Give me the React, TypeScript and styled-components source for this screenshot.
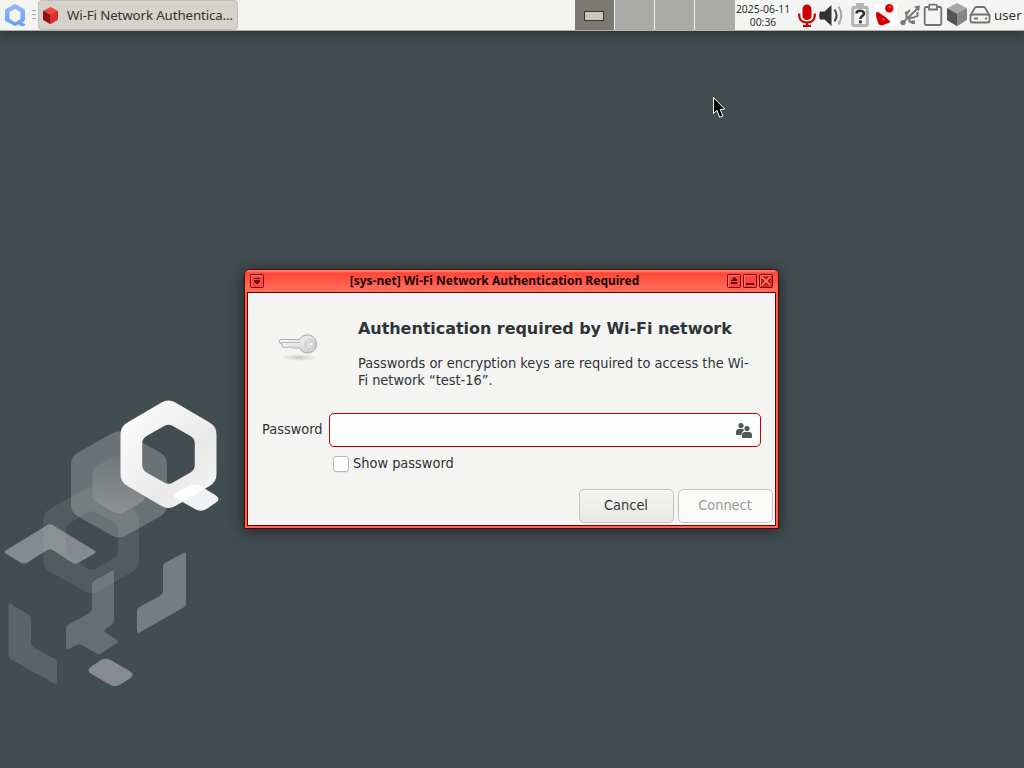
import React from 'react';
import styled, { createGlobalStyle, css } from 'styled-components';

const GlobalStyle = createGlobalStyle`
  * { box-sizing: border-box; }
  body { margin: 0; overflow: hidden; background: #424d52; }
  svg { display: block; flex: none; }
`;

const Desktop = styled.div`
  position: relative;
  width: 1024px;
  height: 768px;
  overflow: hidden;
  background: #424d52;
  color: #2e3436;
  font-family: 'Noto Sans', sans-serif;
`;

const Panel = styled.header`
  display: flex;
  height: 31px;
  background: #f4f4f2;
  border-bottom: 1px solid #b9aea5;
  box-shadow: 0 2px 12px rgba(18, 24, 28, 0.65);
`;

const MenuButton = styled.div`
  width: 31px;
  padding: 3px 0 0 4px;
`;

const Handle = styled.div`
  display: flex;
  flex-direction: column;
  gap: 3px;
  width: 7px;
  padding: 10px 2px 0 1px;
`;

const HandleLine = styled.i`
  height: 1px;
  background: #a9a9a7;
`;

const Task = styled.div`
  display: flex;
  align-items: center;
  width: 200px;
  height: 30px;
  padding: 0 0 0 4px;
  gap: 9px;
  border: 1px solid #c3bfb7;
  border-radius: 4px;
  background: #d5d2cb;
  font-size: 13.33px;
  letter-spacing: -0.13px;
  white-space: nowrap;
`;

const Pager = styled.div`
  display: grid;
  grid-template-columns: 39px 39px 39px 40px;
  gap: 1px;
  width: 160px;
  height: 30px;
  margin-left: 337px;
  background: #f4f4f2;
`;

const Workspace = styled.div<{ $active?: boolean }>`
  padding: 11px 0 0 9px;
  background: ${p => (p.$active ? '#7c7972' : '#aaaaa8')};
`;

const MiniWindow = styled.div`
  width: 20px;
  height: 10px;
  border: 1px solid #2e3436;
  background: #c8c8c0;
`;

const Clock = styled.div`
  width: 58px;
  padding: 3px 2px 0 0;
  font-size: 10.4px;
  line-height: 13px;
  text-align: center;
  white-space: nowrap;
`;

const Tray = styled.div`
  display: flex;
  align-items: flex-start;
  padding-top: 3px;
`;

const User = styled.span`
  padding: 3px 0 0 3px;
  font-size: 13.33px;
  line-height: 18px;
`;

const Wallpaper = styled.svg`
  position: absolute;
  left: 0;
  top: 390px;
`;

const Cursor = styled.svg`
  position: absolute;
  left: 712px;
  top: 96px;
`;

const Window = styled.section`
  position: absolute;
  left: 244px;
  top: 269px;
  width: 535px;
  height: 260px;
  padding: 0 2px 2px;
  border: 1px solid #5c0505;
  border-radius: 6px 6px 0 0;
  background: #ff6250;
  box-shadow: 0 2px 14px 2px rgba(15, 20, 24, 0.55), inset 0 1px #ff9384;
`;

const TitleBar = styled.div`
  display: flex;
  align-items: center;
  gap: 2px;
  height: 22px;
  margin: 0 -2px;
  padding: 0 5px 0;
  border-radius: 5px 5px 0 0;
  background: linear-gradient(#ff8070 0 1px, #ff4635 3px, #ff6957 18px);
`;

const WindowTitle = styled.h1`
  flex: 1;
  margin: 0;
  padding-right: 2px;
  color: #1a0504;
  font-size: 12px;
  line-height: 20px;
  font-weight: 700;
  text-align: center;
  white-space: nowrap;
`;

const Content = styled.div`
  height: 234px;
  padding: 24px 2px 2px 14px;
  border: 1px solid #5c0505;
  background: #f4f4f2;
  font-family: 'DejaVu Sans Condensed', 'DejaVu Sans', sans-serif;
  font-stretch: condensed;
  font-size: 14.43px;
`;

const Intro = styled.div`
  display: flex;
  height: 96px;
`;

const KeyBox = styled.div`
  width: 96px;
  padding: 13px 0 0 14px;
`;

const Heading = styled.h2`
  margin: 1px 0 15px;
  font-family: 'DejaVu Sans', sans-serif;
  font-stretch: normal;
  font-size: 16px;
  letter-spacing: -0.05px;
  line-height: 22px;
  font-weight: 700;
  white-space: nowrap;
`;

const Message = styled.p`
  margin: 0;
  line-height: 17px;
  white-space: nowrap;
`;

const Field = styled.label`
  display: flex;
  align-items: center;
  gap: 6px;
  height: 34px;
`;

const FieldName = styled.span`
  width: 61px;
  padding-bottom: 2px;
  white-space: nowrap;
`;

const Entry = styled.div`
  display: flex;
  align-items: center;
  justify-content: flex-end;
  width: 432px;
  height: 34px;
  padding: 1px 8px 0 0;
  border: 1px solid #c00000;
  border-radius: 5px;
  background: #fff;
`;

const Option = styled.label`
  display: flex;
  align-items: center;
  gap: 4px;
  height: 18px;
  margin: 7px 0 0 71px;
  line-height: 18px;
  white-space: nowrap;
`;

const CheckBox = styled.span`
  width: 16px;
  height: 16px;
  margin-top: 2px;
  border: 1px solid #b9b9b4;
  border-radius: 3px;
  background: #fff;
  box-shadow: 0 1px rgba(0, 0, 0, 0.05);
`;

const Actions = styled.div`
  display: flex;
  justify-content: flex-end;
  gap: 4px;
  margin-top: 17px;
`;

const Button = styled.button<{ $muted?: boolean }>`
  width: 95px;
  height: 34px;
  padding: 0 1px 2px 0;
  border: 1px solid #c3c3bd;
  border-radius: 5px;
  color: #2e3436;
  background: linear-gradient(#f4f4f2, #e8e8e3);
  box-shadow: inset 0 1px #fff;
  font: inherit;
  ${p =>
    p.$muted &&
    css`
      color: #979a99;
      background: #fafaf8;
    `}
`;

type Point = [number, number];

/* Closed path through the points with each corner softened by radius r. */
function soft(points: Point[], r: number): string {
  const n = points.length;
  const toward = (a: Point, b: Point): Point => {
    const d = Math.hypot(b[0] - a[0], b[1] - a[1]);
    const t = Math.min(r, d / 2) / d;
    return [a[0] + (b[0] - a[0]) * t, a[1] + (b[1] - a[1]) * t];
  };
  return (
    points
      .map((p, i) => {
        const s = toward(p, points[(i + n - 1) % n]);
        const e = toward(p, points[(i + 1) % n]);
        return `${i ? 'L' : 'M'}${s.join(' ')}Q${p.join(' ')} ${e.join(' ')}`;
      })
      .join('') + 'Z'
  );
}

function hex(cx: number, top: number, bottom: number, half: number, slope: number): string {
  return soft(
    [
      [cx, top],
      [cx + half, top + slope],
      [cx + half, bottom - slope],
      [cx, bottom],
      [cx - half, bottom - slope],
      [cx - half, top + slope],
    ],
    half > 30 ? 8 : 5,
  );
}

const QubesArt = () => (
  <Wallpaper width="230" height="310" viewBox="0 390 230 310">
    <defs>
      <linearGradient id="q" x1="0" x2="1" y2="1">
        <stop offset="0" stopColor="#fff" />
        <stop offset=".65" stopColor="#e9e9ea" />
        <stop offset="1" stopColor="#f8f8f8" />
      </linearGradient>
      <linearGradient id="inner" x2="0" y2="1">
        <stop stopColor="#74787b" />
        <stop offset="1" stopColor="#93979a" />
      </linearGradient>
    </defs>
    <path fill="#b5b5b0" opacity=".14" fillRule="evenodd" d={hex(91.2, 485.5, 595, 47.8, 27) + hex(92, 510, 571, 26, 15)} />
    <path fill="#d0d0d0" opacity=".29" d={hex(119, 429.5, 539.5, 48, 27)} />
    <path fill="url(#inner)" opacity=".8" d={hex(119, 453.5, 515, 26.5, 15)} />
    <path fill="#bec0c2" opacity=".53" d={soft([[3, 552], [50, 523.5], [97, 552], [75.5, 564.5], [50, 548.5], [24, 564.5]], 3)} />
    <path fill="#bdc1c2" opacity=".42" d={soft([[163, 564], [186, 551.5], [186, 606], [137, 634], [137, 608.5], [163, 594]], 3)} />
    <path fill="#b4b4be" opacity=".32" d={soft([[92, 582], [114, 569.5], [114, 623], [103, 631], [119, 641.5], [99, 655], [79.5, 643.5], [66, 650.5], [66, 626], [92, 611.5]], 3)} />
    <path fill="#b4b4be" opacity=".22" d={soft([[8.5, 602.5], [31, 616], [31, 646], [57, 660], [57, 685], [8.5, 658]], 3)} />
    <path fill="#858b8e" d={soft([[85.5, 670.5], [105.5, 657], [135.5, 674.5], [115.5, 688]], 7)} />
    <path fill="url(#q)" fillRule="evenodd" d={hex(168.5, 398.5, 510, 48, 28) + hex(168.5, 423.5, 485, 26.3, 15)} />
    <path fill="#fff" opacity=".93" d={soft([[171, 495.5], [195, 482.5], [221.5, 499], [201, 512.5]], 7)} />
  </Wallpaper>
);

const QubesLogo = () => (
  <svg width="22" height="25" viewBox="0 0 22 25">
    <defs>
      <linearGradient id="logo" x2="0" y2="1">
        <stop stopColor="#96bdfa" />
        <stop offset="1" stopColor="#629cf4" />
      </linearGradient>
    </defs>
    <path fill="url(#logo)" fillRule="evenodd" d="M11 .8 20 6q1 .6 1 2v8q0 1.400-1 2.200l-2 1.200 3.800 2.200-3 2.200-4.600-2.400-3.200 1.600L2 18.200Q1 17.500 1 16.500V8q0-1.400 1-2ZM11 5.800 5.500 9v7l5.500 3.200 5.500-3.200V9Z" />
  </svg>
);

const Cube = ({ size, tones, ...rest }: { size: [number, number]; tones: [string, string, string] } & React.SVGProps<SVGSVGElement>) => (
  <svg width={size[0]} height={size[1]} viewBox="0 0 20 22" preserveAspectRatio="none" {...rest}>
    <path fill={tones[0]} d="M10 0 19 4.600 20 6v9.500L18.500 17 10 22 1 17 0 15.500V6l1-1.400Z" />
    <path fill={tones[1]} d="m.3 5 9.700 5.500V22L1 17l-1-1.500V6Z" />
    <path fill={tones[2]} d="M10 10.500 19.700 5l.3 1v9.500L18.500 17 10 22Z" />
  </svg>
);

const Microphone = () => (
  <svg width="20" height="25" viewBox="0 0 20 25" fill="none" stroke="#c00" strokeWidth="2.2">
    <rect x="5.500" y="1.500" width="9" height="15.500" rx="4.500" fill="#c00" stroke="none" />
    <path d="M2.200 10.500v2c0 4.200 3.300 7 7.800 7s7.800-2.800 7.800-7v-2M10 19.500V23M6 22.800h8" />
  </svg>
);

const Speaker = () => (
  <svg width="26" height="25" viewBox="0 0 26 25" fill="none" strokeWidth="2.200">
    <path fill="#2e3436" d="M1 8.500h4.500L12.500 2v21l-7-6.500H1Q-.5 12.500 1 8.500Z" />
    <path stroke="#4c5254" d="M15.500 6.500q4 6 0 12" />
    <path stroke="#a9abab" d="M19.500 3.500Q25 12 19.500 21.500" />
  </svg>
);

const Battery = () => (
  <svg width="20" height="25" viewBox="0 0 20 25">
    <path fill="none" stroke="#b4b4b2" strokeWidth="3" d="M4 4.500h12q1.300 0 1.300 1.500v15q0 1.500-1.300 1.500H4q-1.300 0-1.300-1.500V6Q2.700 4.500 4 4.500Z" />
    <path fill="#b4b4b2" d="M6 1q0-1 1-1h6q1 0 1 1v3H6Z" />
    <path fill="none" stroke="#2e3436" strokeWidth="2.600" d="M6.500 10.500c0-3.600 7.500-3.600 7.500 0 0 2.700-3.600 2.300-3.600 5.500" />
    <rect x="9" y="17.500" width="2.800" height="2.800" fill="#2e3436" />
  </svg>
);

const NetworkIcon = () => (
  <svg width="22" height="24" viewBox="0 0 22 24">
    <defs>
      <radialGradient id="dot" cx=".6" cy=".35">
        <stop stopColor="#ff6060" />
        <stop offset=".4" stopColor="#e80000" />
        <stop offset="1" stopColor="#cf0000" />
      </radialGradient>
    </defs>
    <path fill="#fff" d="M0 1h22v22H0z" />
    <path fill="#f9a0a0" d="m8 12 4-4 3 3-3 5Z" opacity=".25" />
    <circle cx="14.300" cy="5.200" r="4.200" fill="url(#dot)" />
    <path fill="#d80000" d="M1 9.500Q3 8 5.500 10.500L12 15.500 15 18q.5 2-3 2.500l-5 2Q3 22.500 2.500 18Q.5 14 1 9.500Z" />
    <path fill="#8d0000" d="m2.500 11 3 1-1.500 3Z" opacity=".5" />
    <circle cx="7.700" cy="17.500" r="3.800" fill="url(#dot)" stroke="#a50000" strokeWidth=".7" />
  </svg>
);

const Usb = () => (
  <svg width="23" height="24" viewBox="0 0 23 24" fill="none" stroke="#777a78" strokeWidth="2">
    <path d="M4 19.500 19 5M7.500 16V10.500L11 7M9.500 14.500l4.500.3 4.500-2V9" />
    <path fill="#777a78" stroke="none" d="m21 2.500-1 6-5-5Z" />
    <circle cx="4" cy="19.500" r="2.600" fill="#777a78" stroke="none" />
    <circle cx="7.500" cy="10" r="1.800" fill="#777a78" stroke="none" />
    <path d="M10.500 14.500v4l3.500 1" />
    <path fill="#777a78" stroke="none" d="M12.500 17.500h3.500v3.500h-3.500z" />
  </svg>
);

const Clipboard = () => (
  <svg width="22" height="24" viewBox="0 0 22 24" fill="none" stroke="#6f7371" strokeWidth="1.800">
    <path d="M7 4H4.200Q2.700 4 2.700 5.500v15Q2.700 22 4.200 22h13.600q1.500 0 1.500-1.500v-15Q19.300 4 17.800 4H15" />
    <path d="M7 6.500v-3Q7 1.700 8.500 1.700h5Q15 1.700 15 3.500v3Z" />
  </svg>
);

const Disk = () => (
  <svg width="22" height="24" viewBox="0 0 22 24" fill="none" stroke="#6f7371" strokeWidth="1.800">
    <path d="M1.500 12.500 5.500 5.500Q6 4 7.500 4h7q1.500 0 2 1.500l4 7v5q0 2-2 2h-15q-2 0-2-2Z" />
    <path d="M1.500 13.500q0-2 2-2h15q2 0 2 2M5 15.500h4M16 15.500h2" />
  </svg>
);

const FrameButton = ({ glyph }: { glyph: 'menu' | 'shade' | 'hide' | 'close' }) => (
  <svg width="14" height="14" viewBox="0 0 14 14">
    <rect x=".5" y=".5" width="13" height="13" rx="1" fill={glyph === 'close' ? '#e52a2a' : '#f44'} stroke="#760606" />
    <path d="M1.500 12.500v-11h11" fill="none" stroke="#ff7767" />
    {glyph === 'menu' && <path fill="#660404" d="M4 3h6v1H4zM4 5h6v2H9v1H8v1H6V8H5V7H4z" transform="translate(0 1)" />}
    {glyph === 'shade' && <path fill="#660404" d="M7 3h1v1h1v1h1v2H4V6h1V5h1V4h1zM4 8h6v2H4z" />}
    {glyph === 'hide' && <path fill="#660404" d="M3 9h8v2H3z" />}
    {glyph === 'close' && (
      <>
        <path fill="none" stroke="#8c0808" strokeWidth="3.600" d="m3.500 3.500 7 7m0-7-7 7" />
        <path fill="none" stroke="#ff7868" strokeWidth="1.800" d="m3 3 8 8m0-8-8 8" />
      </>
    )}
  </svg>
);

const Key = () => (
  <svg width="48" height="48" viewBox="0 0 48 48">
    <defs>
      <radialGradient id="shade">
        <stop stopColor="#aaa" stopOpacity=".6" />
        <stop offset="1" stopColor="#aaa" stopOpacity="0" />
      </radialGradient>
      <linearGradient id="metal" x2="1" y2="1">
        <stop stopColor="#fff" />
        <stop offset="1" stopColor="#cbcbcb" />
      </linearGradient>
    </defs>
    <ellipse cx="23" cy="27.500" rx="18" ry="3.500" fill="url(#shade)" />
    <path fill="url(#metal)" stroke="#aaa" d="M4 9.500h19.500C25 6.500 28 5 31.500 5c5 0 9 3.800 9 9s-4 9-9 9c-3.500 0-6.500-1.700-8-5h-6l-1.500-1.300L14.500 18 13 16.500 11.500 18 10 16.500 8.500 18 6 16.500V14l-3-1.500Z" />
    <path stroke="#b4b4b4" d="M5 12.500h19" />
    <circle cx="34.500" cy="14" r="4.500" fill="#f4f4f2" stroke="#b8b8b8" />
    <circle cx="35" cy="14" r="2.500" fill="#fff" stroke="#b8b8b8" />
  </svg>
);

const People = () => (
  <svg width="16" height="16" viewBox="0 0 16 16" fill="#505758">
    <circle cx="5" cy="2.600" r="2.600" />
    <path d="M3 6h4.500L8 7.500Q5.500 8.500 5.500 12H.8Q0 12 0 11V9Q0 6 3 6Z" />
    <circle cx="11" cy="5.600" r="2.600" />
    <path d="M9 9h4q3 0 3 3v2q0 1-1 1H7q-1 0-1-1v-2q0-3 3-3Z" />
  </svg>
);

export default function App() {
  return (
    <Desktop>
      <GlobalStyle />
      <QubesArt />
      <Panel>
        <MenuButton><QubesLogo /></MenuButton>
        <Handle><HandleLine /><HandleLine /><HandleLine /></Handle>
        <Task>
          <Cube size={[15, 17]} tones={['#ee4840', '#8e1611', '#d7302b']} />
          <span>Wi-Fi Network Authentica...</span>
        </Task>
        <Pager>
          <Workspace $active><MiniWindow /></Workspace>
          <Workspace />
          <Workspace />
          <Workspace />
        </Pager>
        <Clock>2025-06-11<br />00:36</Clock>
        <Tray>
          <svg width="4" height="1" />
          <Microphone />
          <svg width="2" height="1" />
          <Speaker />
          <svg width="5" height="1" />
          <Battery />
          <svg width="5" height="1" />
          <NetworkIcon />
          <svg width="2" height="1" />
          <Usb />
          <Clipboard />
          <svg width="3" height="1" />
          <Cube size={[20, 23]} tones={['#a7a7a7', '#555', '#868686']} />
          <svg width="2" height="1" />
          <Disk />
          <User>user</User>
        </Tray>
      </Panel>
      <Window>
        <TitleBar>
          <FrameButton glyph="menu" />
          <WindowTitle>[sys-net] Wi-Fi Network Authentication Required</WindowTitle>
          <FrameButton glyph="shade" />
          <FrameButton glyph="hide" />
          <FrameButton glyph="close" />
        </TitleBar>
        <Content>
          <Intro>
            <KeyBox><Key /></KeyBox>
            <div>
              <Heading>Authentication required by Wi-Fi network</Heading>
              <Message>
                Passwords or encryption keys are required to access the Wi-<br />Fi network “test-16”.
              </Message>
            </div>
          </Intro>
          <Field>
            <FieldName>Password</FieldName>
            <Entry><People /></Entry>
          </Field>
          <Option><CheckBox />Show password</Option>
          <Actions>
            <Button>Cancel</Button>
            <Button $muted>Connect</Button>
          </Actions>
        </Content>
      </Window>
      <Cursor width="14" height="24" viewBox="0 0 14 24">
        <path d="M1.500 1.500v16l3.500-3.200 2.700 7 3.300-1.300-2.800-6.500 4.500-.5Z" fill="#000" stroke="#fff" />
      </Cursor>
    </Desktop>
  );
}
